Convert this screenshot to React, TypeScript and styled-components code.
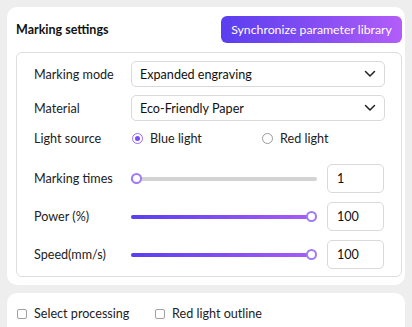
import React from "react";
import styled, { createGlobalStyle } from "styled-components";

const GlobalStyle = createGlobalStyle`
  html, body {
    margin: 0;
    padding: 0;
    background: #eeeeee;
    font-family: Lato, "Noto Sans", sans-serif;
    color: #222;
  }
  * { box-sizing: border-box; }
`;

const Page = styled.div`
  width: 412px;
  height: 327px;
  padding: 7px 7px 0 7px;
  overflow: hidden;
`;

const Card = styled.div`
  background: #fff;
  border-radius: 10px;
  width: 398px;
  padding: 9px 3px 8px 9px;
`;

const BottomCard = styled(Card)`
  margin-top: 8px;
  padding: 13px 10px 14px 10px;
  display: flex;
  align-items: center;
`;

const Header = styled.div`
  display: flex;
  align-items: center;
  justify-content: space-between;
  margin-bottom: 9px;
`;

const Title = styled.h3`
  margin: 0;
  font-size: 12.5px;
  font-weight: 700;
  color: #111;
`;

const SyncButton = styled.button`
  width: 181px;
  height: 27px;
  border: none;
  border-radius: 6px;
  background: linear-gradient(90deg, #5a3ef0 0%, #8b50f4 60%, #b35df8 100%);
  color: #fff;
  font-family: inherit;
  font-size: 12.3px;
  padding: 0;
  cursor: pointer;
`;

const Box = styled.div`
  border: 1px solid #dedede;
  border-radius: 6px;
  width: 386px;
  padding: 8px 16px 7px 17px;
`;

const Row = styled.div<{ mt?: number; h: number }>`
  display: flex;
  align-items: center;
  height: ${(p) => p.h}px;
  margin-top: ${(p) => p.mt ?? 0}px;
`;

const Label = styled.div`
  width: 97px;
  flex-shrink: 0;
  font-size: 12.6px;
  color: #222;
`;

const Select = styled.div`
  flex: 1;
  height: 100%;
  border: 1px solid #d9d9d9;
  border-radius: 5px;
  display: flex;
  align-items: center;
  justify-content: space-between;
  padding: 0 8px 0 8px;
  font-size: 12.6px;
  color: #111;
`;

const RadioGroup = styled.div`
  display: flex;
  align-items: center;
`;

const RadioItem = styled.label<{ w: number }>`
  display: flex;
  align-items: center;
  gap: 7px;
  width: ${(p) => p.w}px;
  font-size: 12.6px;
  color: #222;
`;

const RadioDot = styled.span<{ checked?: boolean }>`
  width: 11px;
  height: 11px;
  border-radius: 50%;
  border: 1px solid ${(p) => (p.checked ? "#9a6cf7" : "#9a9a9a")};
  display: inline-flex;
  align-items: center;
  justify-content: center;
  margin-left: 1px;
  &::after {
    content: "";
    display: ${(p) => (p.checked ? "block" : "none")};
    width: 5px;
    height: 5px;
    border-radius: 50%;
    background: #7a4cf3;
  }
`;

const SliderWrap = styled.div`
  width: 186px;
  height: 12px;
  position: relative;
  display: flex;
  align-items: center;
  margin-right: 10px;
`;

const Track = styled.div`
  width: 100%;
  height: 4px;
  border-radius: 2px;
  background: #d3d3d3;
  position: relative;
`;

const Fill = styled.div`
  position: absolute;
  left: 0;
  top: 0;
  bottom: 0;
  border-radius: 2px;
  background: linear-gradient(90deg, #5b3ff0 0%, #a65cf7 100%);
`;

const Thumb = styled.div`
  position: absolute;
  top: 50%;
  width: 11px;
  height: 11px;
  margin-left: -5.5px;
  margin-top: -5.5px;
  border-radius: 50%;
  background: #fff;
  border: 2px solid #a07af7;
`;

const NumInput = styled.div`
  width: 57px;
  height: 29px;
  border: 1px solid #d9d9d9;
  border-radius: 5px;
  display: flex;
  align-items: center;
  padding-left: 9px;
  font-size: 12.6px;
  color: #111;
`;

const CheckItem = styled.label<{ w: number }>`
  display: flex;
  align-items: center;
  gap: 7px;
  width: ${(p) => p.w}px;
  font-size: 12.6px;
  color: #222;
`;

const CheckBox = styled.span`
  width: 10px;
  height: 10px;
  border: 1px solid #a0a0a0;
  border-radius: 2px;
  display: inline-block;
`;

const Chevron = () => (
  <svg width="12" height="8" viewBox="0 0 12 8" fill="none">
    <path d="M1.5 1.5 L6 6 L10.5 1.5" stroke="#222" strokeWidth="1.5" strokeLinecap="round" strokeLinejoin="round" />
  </svg>
);

interface SliderProps {
  value: number;
  min: number;
  max: number;
}

const Slider: React.FC<SliderProps> = ({ value, min, max }) => {
  const pct = ((value - min) / (max - min)) * 100;
  const pos = 5 + (pct / 100) * (186 - 11);
  return (
    <SliderWrap>
      <Track>
        <Fill style={{ width: pos }} />
      </Track>
      <Thumb style={{ left: pos }} />
    </SliderWrap>
  );
};

const sliders = [
  { label: "Marking times", value: 1, min: 1, max: 100, mt: 17 },
  { label: "Power (%)", value: 100, min: 0, max: 100, mt: 9 },
  { label: "Speed(mm/s)", value: 100, min: 0, max: 100, mt: 9 },
];

const App: React.FC = () => {
  return (
    <>
      <GlobalStyle />
      <Page>
        <Card>
          <Header>
            <Title>Marking settings</Title>
            <SyncButton>Synchronize parameter library</SyncButton>
          </Header>
          <Box>
            <Row h={26}>
              <Label>Marking mode</Label>
              <Select>
                Expanded engraving
                <Chevron />
              </Select>
            </Row>
            <Row h={26} mt={8}>
              <Label>Material</Label>
              <Select>
                Eco-Friendly Paper
                <Chevron />
              </Select>
            </Row>
            <Row h={18} mt={8}>
              <Label>Light source</Label>
              <RadioGroup>
                <RadioItem w={130}>
                  <RadioDot checked />
                  Blue light
                </RadioItem>
                <RadioItem w={100}>
                  <RadioDot />
                  Red light
                </RadioItem>
              </RadioGroup>
            </Row>
            {sliders.map((s) => (
              <Row key={s.label} h={29} mt={s.mt}>
                <Label>{s.label}</Label>
                <Slider value={s.value} min={s.min} max={s.max} />
                <NumInput>{s.value}</NumInput>
              </Row>
            ))}
          </Box>
        </Card>
        <BottomCard>
          <CheckItem w={138}>
            <CheckBox />
            Select processing
          </CheckItem>
          <CheckItem w={140}>
            <CheckBox />
            Red light outline
          </CheckItem>
        </BottomCard>
      </Page>
    </>
  );
};

export default App;
